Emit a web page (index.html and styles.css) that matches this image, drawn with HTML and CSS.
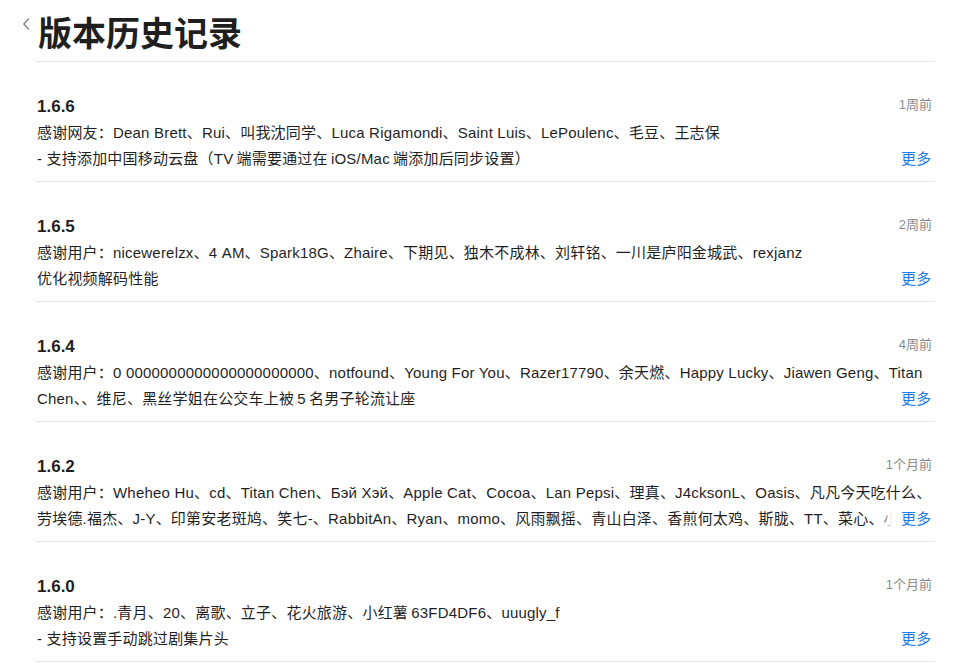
FILE: index.html
```html
<!DOCTYPE html>
<html lang="zh-CN">
<head>
<meta charset="utf-8">
<title>版本历史记录</title>
<link rel="stylesheet" href="styles.css">
</head>
<body>
<div class="page">
  <div class="back" aria-label="返回">
    <svg width="8" height="12" viewBox="0 0 8 12"><path d="M6.5 1 L1.8 6 L6.5 11" fill="none" stroke="#7a7a7a" stroke-width="1.2" stroke-linecap="round" stroke-linejoin="round"/></svg>
  </div>
  <main class="main">
    <header class="header">
      <h1 class="title">版本历史记录</h1>
    </header>
    <section class="release">
      <div class="release-head"><span class="version">1.6.6</span><span class="time">1周前</span></div>
      <div class="notes-wrap">
        <p class="notes">感谢网友：Dean Brett、Rui、叫我沈同学、Luca Rigamondi、Saint Luis、LePoulenc、毛豆、王志保<br>- 支持添加中国移动云盘（TV&thinsp;端需要通过在&thinsp;iOS/Mac&thinsp;端添加后同步设置）</p>
        <span class="more">更多</span>
      </div>
    </section>
    <section class="release">
      <div class="release-head"><span class="version">1.6.5</span><span class="time">2周前</span></div>
      <div class="notes-wrap">
        <p class="notes">感谢用户：nicewerelzx、4 AM、Spark18G、Zhaire、下期见、独木不成林、刘轩铭、一川是庐阳金城武、rexjanz<br>优化视频解码性能</p>
        <span class="more">更多</span>
      </div>
    </section>
    <section class="release">
      <div class="release-head"><span class="version">1.6.4</span><span class="time">4周前</span></div>
      <div class="notes-wrap">
        <p class="notes">感谢用户：0 0000000000000000000000、notfound、Young For You、Razer17790、余天燃、Happy Lucky、Jiawen Geng、Titan Chen、、维尼、黑丝学姐在公交车上被&thinsp;5&thinsp;名男子轮流让座</p>
        <span class="more">更多</span>
      </div>
    </section>
    <section class="release">
      <div class="release-head"><span class="version">1.6.2</span><span class="time">1个月前</span></div>
      <div class="notes-wrap">
        <p class="notes">感谢用户：Wheheo Hu、cd、Titan Chen、Бэй Хэй、Apple Cat、Cocoa、Lan Pepsi、理真、J4cksonL、Oasis、凡凡今天吃什么、劳埃德.福杰、J-Y、印第安老斑鸠、笑七-、RabbitAn、Ryan、momo、风雨飘摇、青山白泽、香煎何太鸡、斯胧、TT、菜心、小鱼、阿杰、Moon</p>
        <span class="more">更多</span>
      </div>
    </section>
    <section class="release">
      <div class="release-head"><span class="version">1.6.0</span><span class="time">1个月前</span></div>
      <div class="notes-wrap">
        <p class="notes">感谢用户：.青月、20、离歌、立子、花火旅游、小红薯&thinsp;63FD4DF6、uuugly_f<br>- 支持设置手动跳过剧集片头</p>
        <span class="more">更多</span>
      </div>
    </section>
  </main>
</div>
</body>
</html>
```
FILE: styles.css
```css
html, body {
  margin: 0;
  padding: 0;
  background: #ffffff;
}

body {
  font-family: "Liberation Sans", "Noto Sans CJK SC", sans-serif;
  color: #1f1f1f;
}

.page {
  display: flex;
  align-items: flex-start;
  padding: 0 25px 0 22px;
}

.back {
  width: 14px;
  flex: none;
  padding-top: 18px;
  display: flex;
}

.main {
  flex: 1;
  min-width: 0;
}

.header {
  padding-top: 12px;
  padding-bottom: 9px;
  border-bottom: 1px solid #e5e5e5;
}

.title {
  margin: 0;
  padding-left: 2px;
  font-family: "Noto Sans CJK SC", sans-serif;
  font-size: 34px;
  line-height: 40px;
  font-weight: 700;
  color: #1f1f1f;
}

.release {
  padding: 35px 0 9px 1px;
  border-bottom: 1px solid #e5e5e5;
}

.release-head {
  display: flex;
  justify-content: space-between;
  align-items: flex-start;
  height: 20px;
  margin-bottom: 3px;
  padding-right: 3px;
}

.version {
  font-size: 17px;
  line-height: 20px;
  font-weight: 700;
  color: #1f1f1f;
}

.time {
  font-size: 13px;
  line-height: 16px;
  color: #8a8a8a;
}

.notes-wrap {
  position: relative;
}

.notes {
  margin: 0;
  font-size: 15px;
  letter-spacing: 0.2px;
  line-height: 26px;
  display: -webkit-box;
  -webkit-line-clamp: 2;
  -webkit-box-orient: vertical;
  overflow: hidden;
  height: 52px;
}

.more {
  position: absolute;
  right: 4px;
  bottom: 0;
  font-size: 15px;
  line-height: 26px;
  color: #1a7cf2;
  padding-left: 20px;
  background: linear-gradient(to right, rgba(255, 255, 255, 0), #ffffff 11px);
}
```
